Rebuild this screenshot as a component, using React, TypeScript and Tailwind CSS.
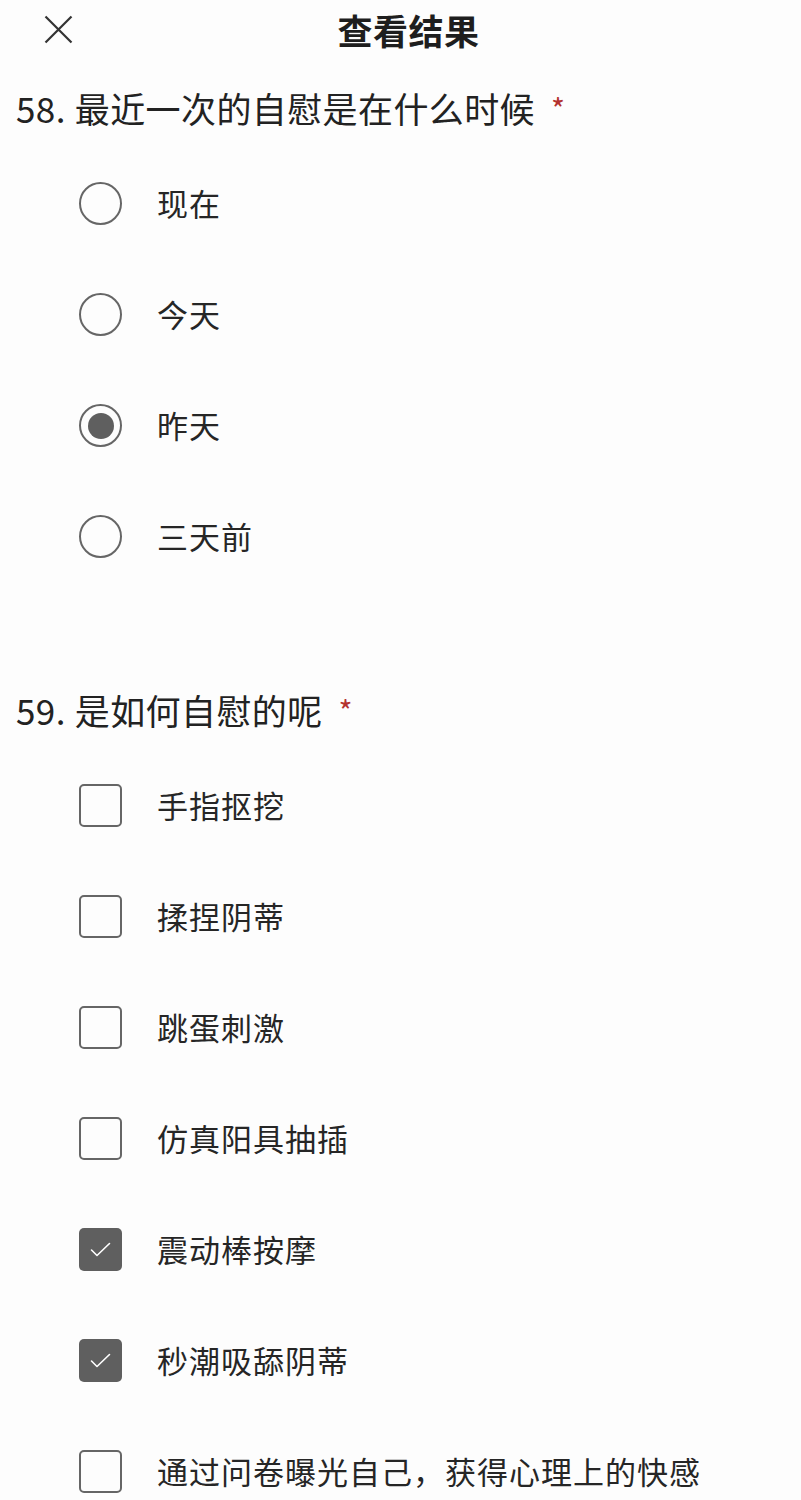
import React from "react";

const q58 = [
  { label: "现在", checked: false },
  { label: "今天", checked: false },
  { label: "昨天", checked: true },
  { label: "三天前", checked: false },
];

const q59 = [
  { label: "手指抠挖", checked: false },
  { label: "揉捏阴蒂", checked: false },
  { label: "跳蛋刺激", checked: false },
  { label: "仿真阳具抽插", checked: false },
  { label: "震动棒按摩", checked: true },
  { label: "秒潮吸舔阴蒂", checked: true },
  { label: "通过问卷曝光自己，获得心理上的快感", checked: false },
];

function Radio({ checked }: { checked: boolean }) {
  return (
    <span className="w-[43px] h-[43px] rounded-full border-2 border-[#666] flex items-center justify-center shrink-0">
      {checked && <span className="w-[26px] h-[26px] rounded-full bg-[#5f5f5f]" />}
    </span>
  );
}

function Checkbox({ checked }: { checked: boolean }) {
  if (checked) {
    return (
      <span className="w-[43px] h-[43px] rounded-[5px] bg-[#5f5f5f] flex items-center justify-center shrink-0">
        <svg width="43" height="43" viewBox="0 0 43 43" fill="none">
          <path d="M12.5 22 L18 27.5 L30.5 15.5" stroke="#fff" strokeWidth="1.6" strokeLinecap="round" strokeLinejoin="round" />
        </svg>
      </span>
    );
  }
  return <span className="w-[43px] h-[43px] rounded-[5px] border-2 border-[#666] shrink-0" />;
}

function Question({ no, title, children }: { no: number; title: string; children: React.ReactNode }) {
  return (
    <section>
      <h2 className="h-[48px] flex items-center pl-[16px] text-[35px] leading-none text-[#222] tracking-[0.4px]">
        <span className="mr-[9px]">{no}.</span>
        <span>{title}</span>
        <span className="ml-[16px] text-[30px] text-[#b3322f] mt-[2px]">*</span>
      </h2>
      <div className="mt-[17px]">{children}</div>
    </section>
  );
}

export default function App() {
  return (
    <div
      className="w-[801px] min-h-[1500px] bg-[#fdfdfd] text-[#222] overflow-hidden"
      style={{ fontFamily: '"Noto Sans CJK SC", "Noto Sans", sans-serif' }}
    >
      {/* header */}
      <header className="relative h-[60px] flex items-center justify-center pl-[16px]">
        <button className="absolute left-[44px] top-[15px] w-[29px] h-[29px]">
          <svg width="29" height="29" viewBox="0 0 29 29" fill="none">
            <path d="M1.5 1.5 L27.5 27.5 M27.5 1.5 L1.5 27.5" stroke="#333" strokeWidth="2.2" />
          </svg>
        </button>
        <h1 className="text-[35px] font-semibold tracking-[0.5px] text-[#1e1e1e]">查看结果</h1>
      </header>

      <div className="mt-[23px]">
        <Question no={58} title="最近一次的自慰是在什么时候">
          {q58.map((o) => (
            <div key={o.label} className="h-[111px] flex items-center pl-[79px]">
              <Radio checked={o.checked} />
              <span className="ml-[35px] text-[31px] tracking-[1px] text-[#262626]">{o.label}</span>
            </div>
          ))}
        </Question>
      </div>

      <div className="mt-[93px]">
        <Question no={59} title="是如何自慰的呢">
          {q59.map((o) => (
            <div key={o.label} className="h-[111px] flex items-center pl-[79px]">
              <Checkbox checked={o.checked} />
              <span className="ml-[35px] text-[31px] tracking-[1px] text-[#262626]">{o.label}</span>
            </div>
          ))}
        </Question>
      </div>
    </div>
  );
}
